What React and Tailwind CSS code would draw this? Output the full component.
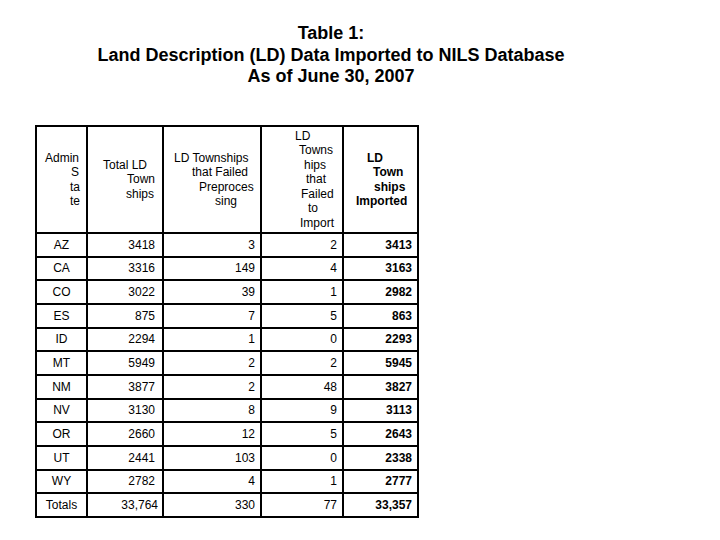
import React from "react";

const rows = [
  ["AZ", "3418", "3", "2", "3413"],
  ["CA", "3316", "149", "4", "3163"],
  ["CO", "3022", "39", "1", "2982"],
  ["ES", "875", "7", "5", "863"],
  ["ID", "2294", "1", "0", "2293"],
  ["MT", "5949", "2", "2", "5945"],
  ["NM", "3877", "2", "48", "3827"],
  ["NV", "3130", "8", "9", "3113"],
  ["OR", "2660", "12", "5", "2643"],
  ["UT", "2441", "103", "0", "2338"],
  ["WY", "2782", "4", "1", "2777"],
];

function HeadCell({ lines, bold }) {
  return (
    <div className={`bg-white flex flex-col justify-center text-[12px] leading-[14.5px] ${bold ? "font-bold" : ""}`}>
      {lines.map(([t, pl], i) => (
        <div key={i} className="whitespace-nowrap" style={{ paddingLeft: pl }}>
          {t}
        </div>
      ))}
    </div>
  );
}

export default function App() {
  return (
    <div className="w-[720px] h-[540px] bg-white text-black font-['Liberation_Sans',Arial,sans-serif] overflow-hidden">
      <div className="w-[662px] pt-[23px] text-center font-bold text-[18px] leading-[21.5px]">
        <div>Table 1:</div>
        <div>Land Description (LD) Data Imported to NILS Database</div>
        <div>As of June 30, 2007</div>
      </div>
      <div className="ml-[35px] mt-[37.5px] w-[384px] bg-black p-[2px] grid grid-cols-[49px_74px_96px_80px_73px] grid-rows-[105px] auto-rows-[21.67px] gap-[2px]">
        <HeadCell lines={[["Admin", 8], ["S", 34], ["ta", 33], ["te", 33]]} />
        <HeadCell lines={[["Total LD", 15], ["Town", 39], ["ships", 38]]} />
        <HeadCell lines={[["LD Townships", 10], ["that Failed", 28], ["Preproces", 35], ["sing", 51]]} />
        <HeadCell
          lines={[["LD", 33], ["Towns", 37], ["hips", 42], ["that", 44], ["Failed", 39], ["to", 46], ["Import", 38]]}
        />
        <HeadCell bold lines={[["LD", 23], ["Town", 29], ["ships", 30], ["Imported", 12]]} />
        {rows.map((r) => (
          <React.Fragment key={r[0]}>
            <div className="bg-white flex items-center justify-center text-[12px]">{r[0]}</div>
            <div className="bg-white flex items-center justify-end pr-[7px] text-[12px]">{r[1]}</div>
            <div className="bg-white flex items-center justify-end pr-[5px] text-[12px]">{r[2]}</div>
            <div className="bg-white flex items-center justify-end pr-[5px] text-[12px]">{r[3]}</div>
            <div className="bg-white flex items-center justify-end pr-[5px] text-[12px] font-bold">{r[4]}</div>
          </React.Fragment>
        ))}
        <div className="bg-white flex items-center justify-center text-[12px]">Totals</div>
        <div className="bg-white flex items-center justify-end pr-[4px] text-[12px]">33,764</div>
        <div className="bg-white flex items-center justify-end pr-[5px] text-[12px]">330</div>
        <div className="bg-white flex items-center justify-end pr-[5px] text-[12px]">77</div>
        <div className="bg-white flex items-center justify-end pr-[5px] text-[12px] font-bold">33,357</div>
      </div>
    </div>
  );
}
